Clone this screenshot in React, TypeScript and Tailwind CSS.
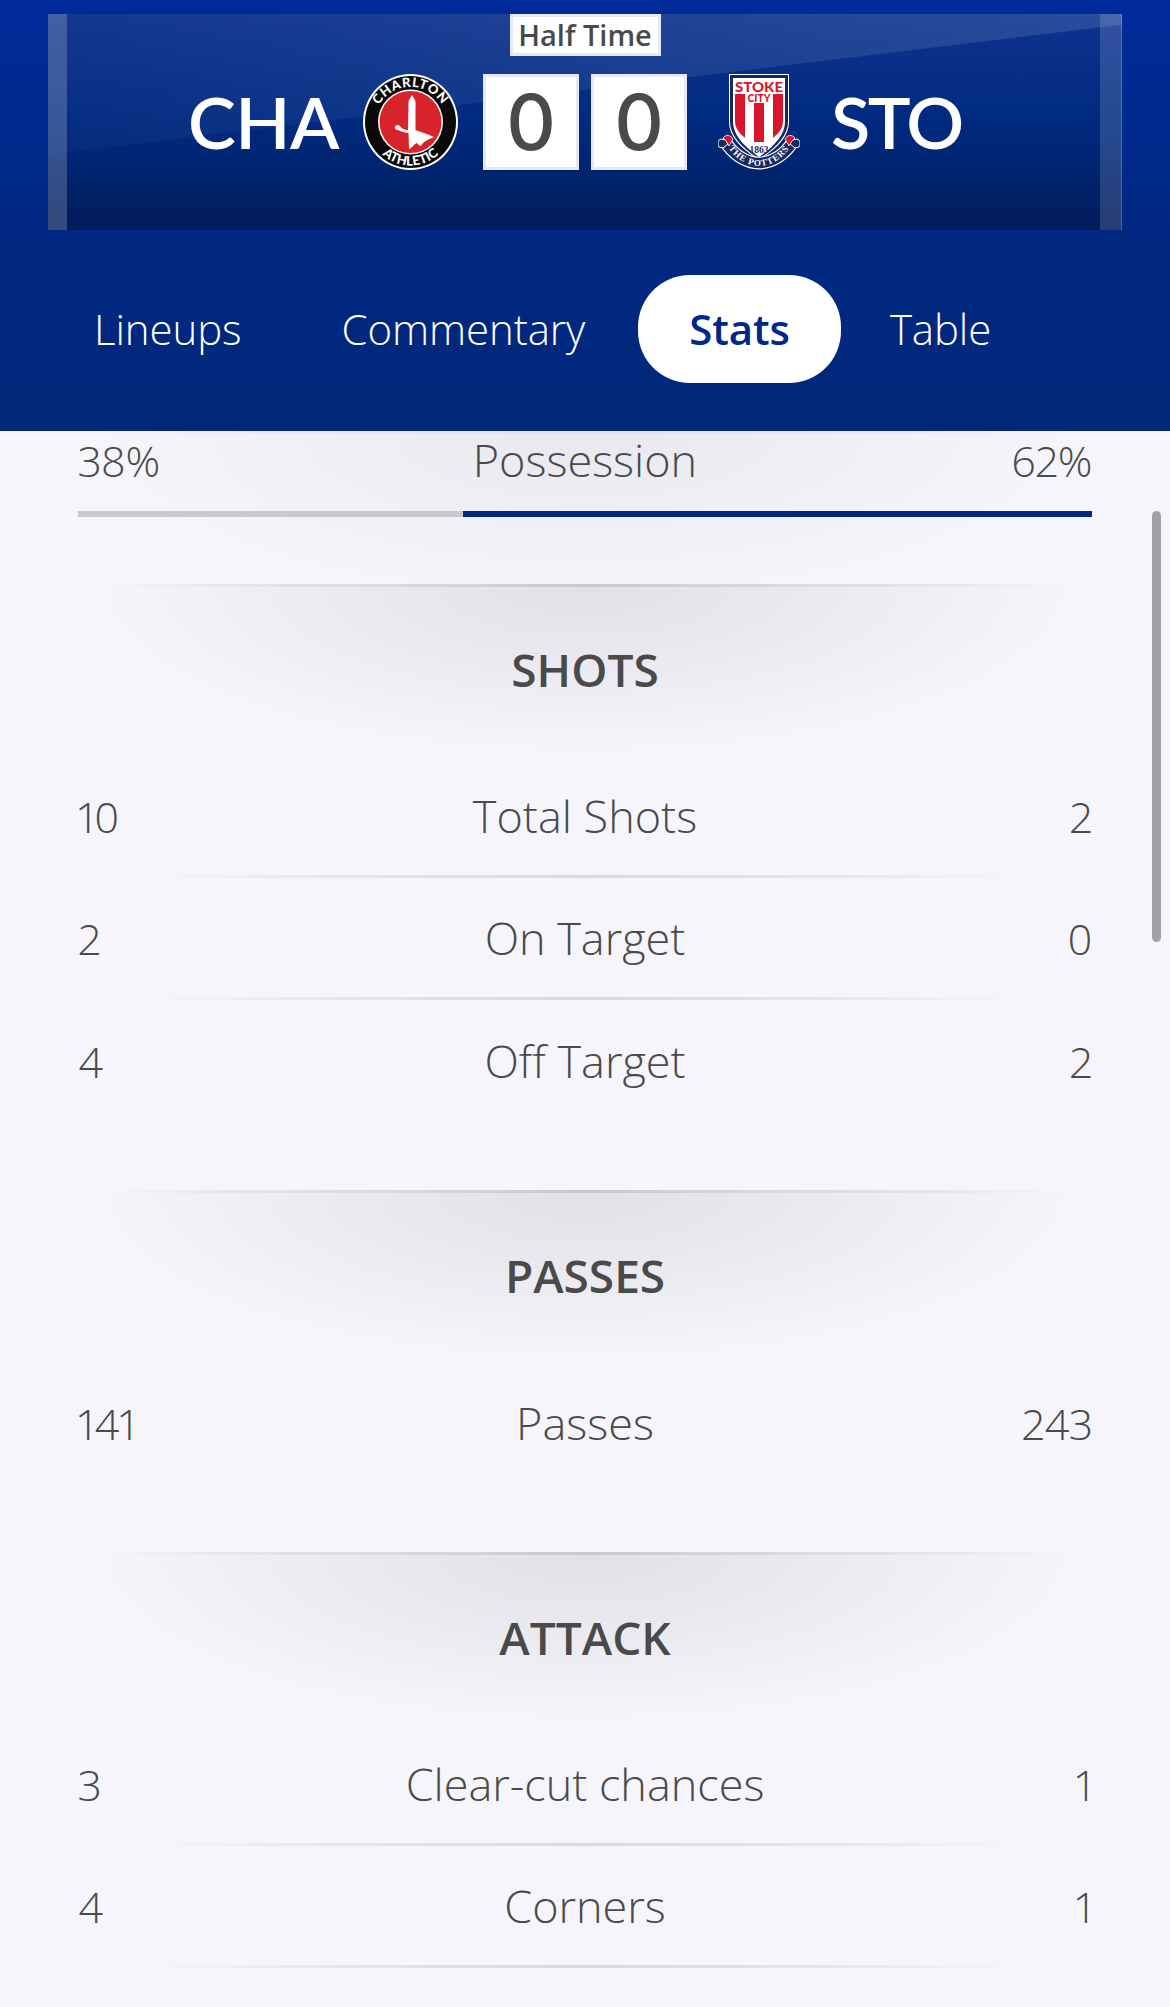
import React from 'react';

const tabs = ['Lineups', 'Commentary', 'Stats', 'Table'];

const sections = [
  {
    title: 'SHOTS',
    rows: [
      ['10', 'Total Shots', '2'],
      ['2', 'On Target', '0'],
      ['4', 'Off Target', '2'],
    ],
  },
  { title: 'PASSES', rows: [['141', 'Passes', '243']] },
  {
    title: 'ATTACK',
    rows: [
      ['3', 'Clear-cut chances', '1'],
      ['4', 'Corners', '1'],
      ['', '', ''],
    ],
  },
];

const CharltonCrest = () => (
  <svg width="95" height="96" viewBox="0 0 95 96">
    <defs>
      <path id="cha-top" d="M10.5 50 A37 37 0 0 1 84.5 50" />
      <path id="cha-bottom" d="M6 50 A41.5 41.5 0 0 0 89 50" />
    </defs>
    <ellipse cx="47.5" cy="48" rx="47.5" ry="48" fill="#ffffff" />
    <ellipse cx="47.5" cy="48" rx="45.5" ry="46" fill="#0a0a0a" />
    <circle cx="47.5" cy="48" r="32.5" fill="#ffffff" />
    <circle cx="47.5" cy="48" r="31" fill="#d8232a" />
    <text fill="#ffffff" fontFamily="Lato, sans-serif" fontWeight="900" fontSize="13" letterSpacing="0.8">
      <textPath href="#cha-top" startOffset="50%" textAnchor="middle">CHARLTON</textPath>
    </text>
    <text fill="#ffffff" fontFamily="Lato, sans-serif" fontWeight="900" fontSize="13" letterSpacing="0.2">
      <textPath href="#cha-bottom" startOffset="50%" textAnchor="middle">ATHLETIC</textPath>
    </text>
    <path d="M49 21 L45.5 27 L45 56 L52.5 56 L52.5 27 Z" fill="#ffffff" />
    <path d="M34 51 C31 52 31 56 35 56 C39 58 42 59 45.5 59 L46 75 C48 75 51 70 54 69 C55 71 57 72 58 72 C59 69 63 66 71 63 C65 60 58 58 52 56 L45 56 C41 56 38 54 37 52 C36 51 35 51 34 51 Z" fill="#ffffff" />
  </svg>
);

const StokeCrest = () => (
  <svg width="82" height="96" viewBox="0 0 82 96">
    <path d="M11 0 H71 V48 C71 62 60 74 41 86 C22 74 11 62 11 48 Z" fill="#ffffff" />
    <path d="M12 1 H70 V48 C70 61 59 73 41 85 C23 73 12 61 12 48 Z" fill="#16295f" />
    <path d="M15 4 H67 V48 C67 60 57 72 41 83 C25 72 15 60 15 48 Z" fill="#ffffff" />
    <path d="M17 20 H27 V64 C21 59 17 54 17 47 Z" fill="#d9152c" />
    <rect x="36" y="29" width="10" height="39" fill="#d9152c" />
    <path d="M55 20 H65 V47 C65 54 61 59 55 64 Z" fill="#d9152c" />
    <text x="41" y="18" textAnchor="middle" fill="#d9152c" fontFamily="Lato, sans-serif" fontWeight="900" fontSize="14" textLength="48" lengthAdjust="spacingAndGlyphs">STOKE</text>
    <text x="41" y="28" textAnchor="middle" fill="#d9152c" fontFamily="Lato, sans-serif" fontWeight="900" fontSize="10.5" textLength="23" lengthAdjust="spacingAndGlyphs">CITY</text>
    <text x="41" y="79" textAnchor="middle" fill="#16295f" fontFamily="'Liberation Serif', serif" fontWeight="700" fontSize="11" textLength="19" lengthAdjust="spacingAndGlyphs">1863</text>
    <path d="M7 67 C14 80 28 89 41 89 C54 89 68 80 75 67" fill="none" stroke="#ffffff" strokeWidth="13" />
    <path d="M7 67 C14 80 28 89 41 89 C54 89 68 80 75 67" fill="none" stroke="#16295f" strokeWidth="10.5" />
    <path d="M1 73 C-1 69 0 66 3 65 L8 66 L10 70 L5 74 Z" fill="#16295f" stroke="#ffffff" strokeWidth="1" />
    <path d="M5 64 C8 60 13 61 15 65 L11 72 L8 67 Z" fill="#d9152c" stroke="#ffffff" strokeWidth="0.8" />
    <path d="M81 73 C83 69 82 66 79 65 L74 66 L72 70 L77 74 Z" fill="#16295f" stroke="#ffffff" strokeWidth="1" />
    <path d="M77 64 C74 60 69 61 67 65 L71 72 L74 67 Z" fill="#d9152c" stroke="#ffffff" strokeWidth="0.8" />
    <defs>
      <path id="sto-band" d="M8 70 C15 83 28 92 41 92 C54 92 67 83 74 70" />
    </defs>
    <text fill="#ffffff" fontFamily="'Liberation Serif', serif" fontWeight="700" fontSize="9" letterSpacing="0.9">
      <textPath href="#sto-band" startOffset="50%" textAnchor="middle">THE POTTERS</textPath>
    </text>
  </svg>
);

const ScoreBox = ({ value }: { value: string }) => (
  <div className="w-[96px] h-[96px] bg-white border-[3px] border-[#e6e9f2] flex items-center justify-center text-[#4a4a4a] text-[77px] font-medium leading-none font-['Inter',sans-serif]">
    {value}
  </div>
);

const Divider = () => (
  <div className="h-[3px] bg-[linear-gradient(90deg,transparent_13%,#e4e4ea_30%,#d8d8de_50%,#e4e4ea_70%,transparent_87%)]"></div>
);

const StatLine = ({ left, label, right }: { left: string; label: string; right: string }) => (
  <div className="grid grid-cols-[1fr_auto_1fr] items-baseline px-[78px] text-[43px] font-[340] tracking-[-0.5px] proportional-nums font-['Open_Sans',sans-serif]">
    <span>{left}</span>
    <span className="text-[45px] tracking-normal">{label}</span>
    <span className="text-right">{right}</span>
  </div>
);

export default function App() {
  return (
    <div className="relative w-[1170px] h-[2007px] overflow-hidden flex flex-col bg-[#f5f5fb] text-[#4a4a4a] font-['Lato',sans-serif]">
      <header className="h-[431px] shrink-0 pt-[14px] px-[48px] bg-[linear-gradient(180deg,#002a9a_0%,#002882_55%,#00287a_100%)]">
        <div className="relative h-[216px] flex flex-col items-center bg-[linear-gradient(180deg,#0f338f_0%,#002a80_50%,#011c5a_100%)]">
          <div className="absolute inset-0 [clip-path:polygon(0_0,100%_0,100%_5%,0_65%)] bg-[linear-gradient(90deg,rgba(255,255,255,0.02),rgba(255,255,255,0.12))]"></div>
          <div className="absolute left-0 top-0 bottom-0 w-[19px] bg-white/20"></div>
          <div className="absolute right-0 top-0 bottom-0 w-[22px] bg-white/15 border-r border-white/20"></div>
          <div className="relative h-[42px] w-[151px] bg-white border-[3px] border-[#e6e9f2] flex items-center justify-center text-[29px] font-semibold text-[#4a4a4a] font-['Open_Sans',sans-serif]">
            Half Time
          </div>
          <div className="relative mt-[18px] w-full grid grid-cols-[1fr_auto_1fr] text-white text-[72px] font-semibold leading-none">
            <div className="flex items-center justify-end gap-[24px] pr-[25px]">
              <span className="-mt-[3px] tracking-[-0.5px]">CHA</span>
              <CharltonCrest />
            </div>
            <div className="flex gap-[12px]">
              <ScoreBox value="0" />
              <ScoreBox value="0" />
            </div>
            <div className="flex items-center gap-[31px] pl-[31px]">
              <StokeCrest />
              <span className="-mt-[3px] tracking-[-2.5px]">STO</span>
            </div>
          </div>
        </div>
        <nav className="mt-[45px] -mx-[48px] pl-[44px] flex text-[42px] tracking-[-0.1px] text-white font-['Open_Sans',sans-serif]">
          {tabs.map((tab) => (
            <div
              key={tab}
              className={
                tab === 'Stats'
                  ? 'h-[108px] pb-[2px] px-[51px] ml-[3px] -mr-[1px] flex items-center rounded-[52px] bg-white text-[#00288a] font-semibold'
                  : 'h-[108px] pb-[2px] px-[50px] flex items-center font-[340]'
              }
            >
              {tab}
            </div>
          ))}
        </nav>
      </header>

      <section className="h-[153px] shrink-0 bg-[radial-gradient(ellipse_42%_170px_at_50%_0,#e8e8ee,#eeeef4_45%,transparent)]">
        <div className="h-[3px] bg-[linear-gradient(90deg,transparent_8%,#e2e2e8_50%,transparent_92%)]"></div>
        <div className="h-[51px] flex flex-col justify-center">
          <StatLine left="38%" label="Possession" right="62%" />
        </div>
        <div className="mt-[26px] mx-[78px] h-[6px] flex">
          <div className="w-[385px] bg-[#c8c8ce]"></div>
          <div className="flex-1 bg-[#00287c]"></div>
        </div>
      </section>

      {sections.map((section) => (
        <section
          key={section.title}
          className="shrink-0 pb-[68px] bg-[radial-gradient(ellipse_42%_170px_at_50%_0,#e0e0e6,#e9e9ef_45%,transparent)]"
        >
          <div className="h-[3px] bg-[linear-gradient(90deg,transparent_10%,#dcdce2_30%,#c8c8ce_50%,#dcdce2_70%,transparent_90%)]"></div>
          <h2 className="h-[169px] pb-[4px] flex items-center justify-center text-[46px] font-semibold font-['Open_Sans',sans-serif]">{section.title}</h2>
          {section.rows.map((row, i) => (
            <div key={i} className="h-[122px] flex flex-col">
              <div className="flex-1 flex flex-col justify-center">
                <StatLine left={row[0]} label={row[1]} right={row[2]} />
              </div>
              {i < section.rows.length - 1 && <Divider />}
            </div>
          ))}
        </section>
      ))}

      <div className="absolute left-[1152px] top-[511px] w-[9px] h-[431px] rounded-full bg-[#a2a1a6]"></div>
    </div>
  );
}
